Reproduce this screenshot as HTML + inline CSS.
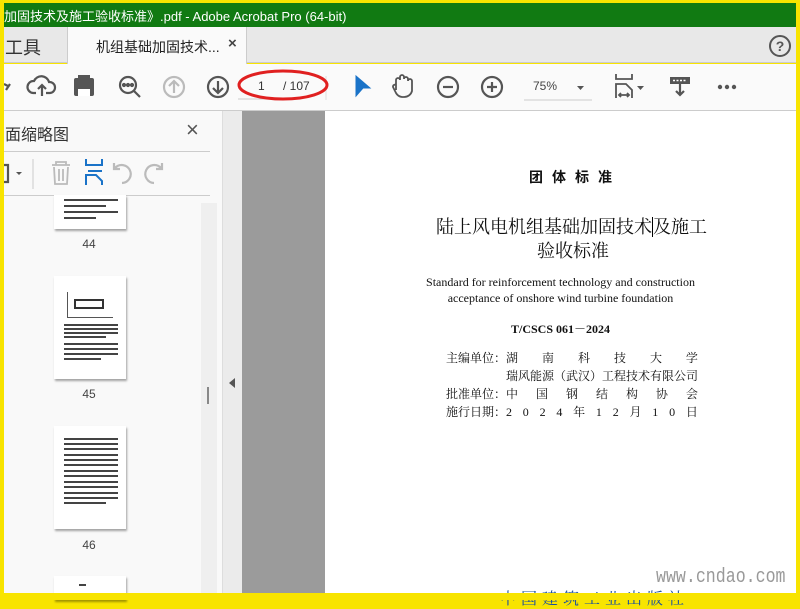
<!DOCTYPE html>
<html><head><meta charset="utf-8"><style>
*{margin:0;padding:0;box-sizing:border-box}
body{width:800px;height:600px;overflow:hidden;background:#f8e400;position:relative;font-family:"Liberation Sans","Noto Sans CJK SC",sans-serif}
.a{position:absolute}
.cn{font-family:"Liberation Serif","Noto Serif CJK SC",serif;color:#111}
.thumb{position:absolute;left:54px;width:72px;background:#fff;box-shadow:1px 2px 2px rgba(0,0,0,.35);overflow:hidden}
.lines{position:absolute;left:10px;right:8px;height:2px;background:#444}
.lbl{position:absolute;left:70px;width:40px;text-align:center;font-size:12px;color:#444}
</style></head><body>
<div class="a" style="left:4px;top:3px;width:792px;height:24px;background:#117a12"></div>
<div class="a" style="left:4px;top:6px;font-size:13px;color:#fff;white-space:nowrap">加固技术及施工验收标准》.pdf - Adobe Acrobat Pro (64-bit)</div>
<div class="a" style="left:4px;top:27px;width:792px;height:36px;background:#e8e8e8;border-bottom:1px solid #ccc"></div>
<div class="a" style="left:5px;top:34px;font-size:18px;color:#333">工具</div>
<div class="a" style="left:67px;top:27px;width:180px;height:37px;background:#fafafa;border-left:1px solid #ccc;border-right:1px solid #ccc"></div>
<div class="a" style="left:96px;top:37px;font-size:14px;color:#222">机组基础加固技术...</div>
<div class="a" style="left:228px;top:35px;font-size:15px;color:#444;font-weight:bold">×</div>
<svg class="a" style="left:768px;top:34px" width="24" height="24"><circle cx="12" cy="12" r="10" fill="none" stroke="#555" stroke-width="2"/><text x="12" y="17" text-anchor="middle" font-size="14" font-weight="bold" fill="#555" font-family="Liberation Sans">?</text></svg>
<div class="a" style="left:4px;top:64px;width:792px;height:46px;background:#fafafa"></div>
<svg class="a" style="left:4px;top:64px" width="792" height="46" fill="none" stroke="#555" stroke-width="2.2">
<path d="M0 20 l4 2 M2 26 l4 -6"/>
<path d="M32 29 h-3 a6 6 0 0 1 1-12 a8 8 0 0 1 15 1 a5 5 0 0 1 1 11 h-4 M38 32 v-11 m-4 4 l4-4 l4 4"/>
<rect x="70" y="14" width="20" height="18" rx="2" fill="#555" stroke="none"/><rect x="74" y="11" width="12" height="5" fill="#555" stroke="none"/><rect x="74" y="25" width="12" height="7" fill="#fff" stroke="none"/>
<circle cx="124" cy="21" r="8"/><path d="M130 27 l6 6"/><circle cx="120" cy="21" r="1" fill="#555"/><circle cx="124" cy="21" r="1" fill="#555"/><circle cx="128" cy="21" r="1" fill="#555"/>
<g stroke="#bbb"><circle cx="170" cy="23" r="10"/><path d="M170 29 v-12 m-5 5 l5-5 l5 5"/></g>
<circle cx="214" cy="23" r="10"/><path d="M214 17 v12 m-5 -5 l5 5 l5 -5"/>
<path d="M234 35 h40" stroke="#ccc" stroke-width="1"/>
<path d="M322 12 v24" stroke="#ddd" stroke-width="1"/>
<path d="M352 12 l14 12 h-7 l-7 8 z" fill="#1a73c8" stroke="#1a73c8" stroke-width="1"/>
<path d="M392 26 v-10 a2 2 0 0 1 4 0 v-3 a2 2 0 0 1 4 0 v2 a2 2 0 0 1 4 0 v2 a2 2 0 0 1 4 0 v10 a8 8 0 0 1 -8 6 h-2 a8 8 0 0 1-6-4 l-3-6 a2 2 0 0 1 3-2 z" stroke-width="1.8"/>
<circle cx="444" cy="23" r="10"/><path d="M439 23 h10"/>
<circle cx="488" cy="23" r="10"/><path d="M483 23 h10 M488 18 v10"/>
<path d="M520 36 h68" stroke="#ccc" stroke-width="1"/>
<path d="M573 22 h7 l-3.5 4 z" fill="#555" stroke="none"/>
<path d="M612 10 v5 h16 v-5 M612 34 v-14 h10 l6 6 v8 M615 31 h10 m-8-2 l-2 2 2 2 m6-4 l2 2-2 2" stroke-width="1.8"/>
<path d="M633 22 h7 l-3.5 4 z" fill="#555" stroke="none"/>
<rect x="666" y="13" width="20" height="7" fill="#555" stroke="none"/><path d="M669 16.5 h14" stroke="#fff" stroke-width="1.5" stroke-dasharray="2 1.5"/><path d="M676 20 v11 m-4-4 l4 4 l4-4"/>
<g fill="#555" stroke="none"><circle cx="716" cy="23" r="2.2"/><circle cx="723" cy="23" r="2.2"/><circle cx="730" cy="23" r="2.2"/></g>
</svg>
<div class="a" style="left:258px;top:79px;font-size:12px;color:#333">1</div>
<div class="a" style="left:283px;top:79px;font-size:12px;color:#333">/ 107</div>
<div class="a" style="left:533px;top:79px;font-size:12px;color:#444">75%</div>
<svg class="a" style="left:236px;top:66px" width="100" height="40"><ellipse cx="47" cy="19" rx="44" ry="14" fill="none" stroke="#e02020" stroke-width="3"/></svg>
<div class="a" style="left:4px;top:110px;width:218px;height:490px;background:#f9f9f9"></div>
<div class="a" style="left:4px;top:110px;width:792px;height:1px;background:#ccc"></div>
<div class="a" style="left:5px;top:121px;font-size:16px;color:#333">面缩略图</div>
<div class="a" style="left:186px;top:117px;font-size:22px;color:#555">×</div>
<div class="a" style="left:4px;top:151px;width:206px;height:1px;background:#ccc"></div>
<div class="a" style="left:4px;top:195px;width:206px;height:1px;background:#ccc"></div>
<svg class="a" style="left:4px;top:155px" width="210" height="38" fill="none" stroke-width="2.2">
<path d="M0 10 h4 v17 h-4" stroke="#555"/><path d="M12 17 h6 l-3 3 z" fill="#555"/>
<path d="M29 4 v30" stroke="#ccc" stroke-width="1"/>
<g stroke="#bbb"><path d="M48 10 h18 M52 10 v-3 h10 v3 M50 12 l1 17 h12 l1-17 M55 14 v12 M59 14 v12" stroke-width="1.8"/>
<path d="M118 28 a9 9 0 1 0 -7 -15 M110 8 v6 h6"/><path d="M150 28 a9 9 0 1 1 7 -15 M158 8 v6 h-6"/></g>
<path d="M82 4 v6 h16 v-6 M82 30 v-10 h10 l6 6 v4 M84 16 h14" stroke="#1a73c8" stroke-width="2"/>
</svg>
<div class="a" style="left:201px;top:203px;width:16px;height:397px;background:#efefef"></div>
<div class="a" style="left:207px;top:387px;width:2px;height:17px;background:#888"></div>
<div class="thumb" style="top:195px;height:34px"><div class="lines" style="top:4px"></div><div class="lines" style="top:10px;right:20px"></div><div class="lines" style="top:16px"></div><div class="lines" style="top:22px;right:30px"></div></div>
<div class="lbl" style="left:69px;top:237px">44</div>
<div class="thumb" style="top:276px;height:103px">
<div class="a" style="left:13px;top:16px;width:46px;height:26px;border-left:1px solid #555;border-bottom:1px solid #555"></div>
<div class="a" style="left:20px;top:23px;width:30px;height:10px;border:2px solid #333"></div>
<div class="lines" style="top:48px"></div><div class="lines" style="top:52px"></div><div class="lines" style="top:56px"></div><div class="lines" style="top:60px;right:20px"></div><div class="lines" style="top:67px"></div><div class="lines" style="top:72px"></div><div class="lines" style="top:77px"></div><div class="lines" style="top:82px;right:25px"></div></div>
<div class="lbl" style="left:69px;top:387px">45</div>
<div class="thumb" style="top:426px;height:103px">
<div class="lines" style="top:12px"></div><div class="lines" style="top:17px"></div><div class="lines" style="top:22px"></div><div class="lines" style="top:28px"></div><div class="lines" style="top:33px"></div><div class="lines" style="top:38px"></div><div class="lines" style="top:44px"></div><div class="lines" style="top:49px"></div><div class="lines" style="top:55px"></div><div class="lines" style="top:60px"></div><div class="lines" style="top:66px"></div><div class="lines" style="top:71px"></div><div class="lines" style="top:76px;right:20px"></div></div>
<div class="lbl" style="left:69px;top:538px">46</div>
<div class="thumb" style="top:576px;height:24px"><div class="lines" style="top:8px;right:40px;left:25px"></div></div>
<div class="a" style="left:222px;top:111px;width:20px;height:489px;background:#ebebeb;border-left:1px solid #ddd"></div>
<div class="a" style="left:229px;top:378px;width:0;height:0;border-top:5px solid transparent;border-bottom:5px solid transparent;border-right:6px solid #555"></div>
<div class="a" style="left:242px;top:111px;width:83px;height:489px;background:#9b9b9b"></div>
<div class="a" style="left:325px;top:111px;width:471px;height:489px;background:#fff"></div>
<div class="a cn" style="left:529px;top:167px;font-size:14px;font-weight:bold;letter-spacing:9px;font-family:'Noto Sans CJK SC',sans-serif">团体标准</div>
<div class="a cn" style="left:436px;top:213px;font-size:18px;white-space:nowrap">陆上风电机组基础加固技术<span style="border-left:1px solid #000"></span>及施工</div>
<div class="a cn" style="left:537px;top:237px;font-size:18px">验收标准</div>
<div class="a cn" style="left:325px;width:471px;text-align:center;top:274px;font-size:12px;line-height:16px">Standard for reinforcement technology and construction<br>acceptance of onshore wind turbine foundation</div>
<div class="a cn" style="left:325px;width:471px;text-align:center;top:320px;font-size:12px;font-weight:bold">T/CSCS 061－2024</div>
<div class="a cn" style="left:446px;top:349px;font-size:12px;line-height:18px">主编单位：<br><br>批准单位：<br>施行日期：</div>
<div class="a cn" style="left:506px;top:349px;width:192px;font-size:12px;line-height:18px">
<div style="display:flex;justify-content:space-between"><span>湖</span><span>南</span><span>科</span><span>技</span><span>大</span><span>学</span></div>
<div style="white-space:nowrap">瑞风能源（武汉）工程技术有限公司</div>
<div style="display:flex;justify-content:space-between"><span>中</span><span>国</span><span>钢</span><span>结</span><span>构</span><span>协</span><span>会</span></div>
<div style="display:flex;justify-content:space-between"><span>2</span><span>0</span><span>2</span><span>4</span><span>年</span><span>1</span><span>2</span><span>月</span><span>1</span><span>0</span><span>日</span></div>
</div>
<div class="a cn" style="left:500px;top:586px;font-size:16px;letter-spacing:5px;color:#1a4f9c">中国建筑工业出版社</div>
<div class="a" style="left:656px;top:566px;font-size:20px;color:#999;font-family:'Liberation Mono',monospace;transform:scaleX(.83);transform-origin:left top;white-space:nowrap">www.cndao.com</div>
<div class="a" style="left:0;top:593px;width:800px;height:7px;background:#f8e400"></div>
<div class="a" style="left:796px;top:0;width:4px;height:600px;background:#f8e400"></div>
</body></html>
